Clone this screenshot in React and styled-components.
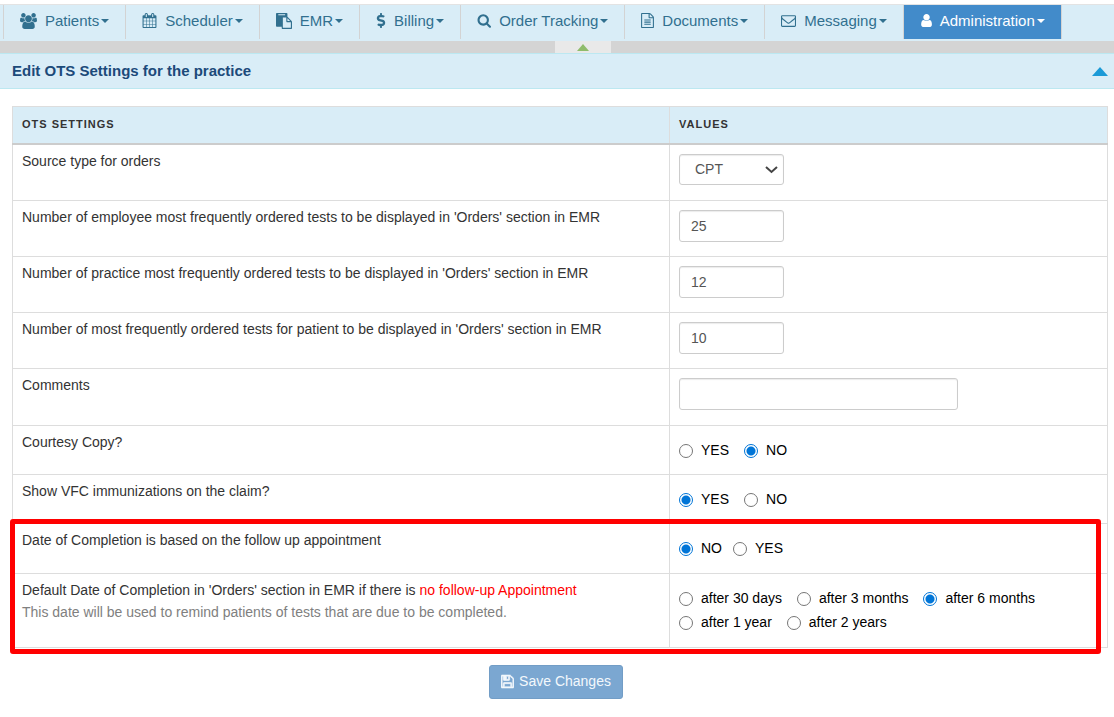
import { useState } from 'react';
import styled, { createGlobalStyle, css } from 'styled-components';
import { FaDollarSign } from 'react-icons/fa';

const GlobalStyle = createGlobalStyle`
    *,
    *::before,
    *::after {
        box-sizing: border-box;
    }

    body {
        margin: 0;
        background: #fff;
        color: #333;
        font-family: 'Liberation Sans', Arial, sans-serif;
        font-size: 14px;
        line-height: 22px;
    }
`;

const Nav = styled.nav`
    display: flex;
    margin-top: 4px;
    padding-left: 3px;
    height: 37px;
    background: #d9edf7;
    border-top: 1px solid #e3e3e3;
`;

const NavButton = styled.button`
    display: flex;
    align-items: center;
    height: 34px;
    padding: 0 16px 3px;
    border: 0;
    border-left: 1px solid #d3d3d3;
    background: transparent;
    color: #31708f;
    font-family: inherit;
    font-size: 15px;
    white-space: nowrap;

    svg {
        flex: none;
        margin-right: 8px;
    }

    ${(props) =>
        props.$active &&
        css`
            background: #428bca;
            color: #fff;
            border-right: 1px solid #d3d3d3;
        `}
`;

const DollarIcon = styled(FaDollarSign)`
    width: 10px;
    height: 15px;
`;

const Caret = styled.span`
    margin-left: 2px;
    border-top: 4px solid currentColor;
    border-left: 4px solid transparent;
    border-right: 4px solid transparent;
`;

const CollapseBar = styled.div`
    display: flex;
    justify-content: center;
    padding-left: 52px;
    height: 12px;
    background: #d4d4d4;
`;

const CollapseTab = styled.button`
    display: flex;
    align-items: center;
    justify-content: center;
    width: 56px;
    padding: 0;
    border: 0;
    background: #e9e9e9;
    color: #8fbc6b;
`;

const ArrowUp = styled.span`
    border-bottom: ${(props) => props.$height}px solid currentColor;
    border-left: ${(props) => props.$half}px solid transparent;
    border-right: ${(props) => props.$half}px solid transparent;
`;

const PanelHead = styled.header`
    display: flex;
    align-items: center;
    justify-content: space-between;
    height: 36px;
    padding: 0 6px 0 12px;
    background: #d9edf7;
    border-top: 1px solid #bce8f1;
    border-bottom: 1px solid #bce8f1;

    h1 {
        margin: 0;
        color: #1c4a7a;
        font-size: 15px;
    }
`;

const PanelToggle = styled.button`
    display: flex;
    padding: 0;
    border: 0;
    background: none;
    color: #1a9ad7;
`;

const TableWrap = styled.div`
    position: relative;
    margin: 17px 6px 0 12px;
`;

const Table = styled.table`
    width: 100%;
    border-collapse: collapse;
    table-layout: fixed;

    th,
    td {
        padding: 9px;
        border: 1px solid #ddd;
        text-align: left;
        vertical-align: top;
    }

    th {
        width: 40%;
        height: 37px;
        padding: 6px 9px;
        background: #d9edf7;
        border-bottom: 2px solid #ccc;
        font-size: 11px;
        letter-spacing: 1px;
        text-transform: uppercase;
    }

    th:first-child {
        width: 60%;
    }

    td:first-child {
        padding-top: 5px;
    }
`;

const Row = styled.tr`
    height: ${(props) => props.$height}px;
`;

const Highlight = styled.div`
    position: absolute;
    left: -2px;
    right: 7px;
    bottom: -6px;
    height: 135px;
    border: 5px solid #f00;
    border-radius: 3px;
    pointer-events: none;
`;

const fieldStyle = css`
    display: block;
    border: 1px solid #ccc;
    border-radius: 3px;
    background-color: #fff;
    box-shadow: inset 0 1px 1px rgba(0, 0, 0, 0.08);
    color: #555;
    font-family: inherit;
    font-size: 14px;
`;

const TextInput = styled.input`
    ${fieldStyle}
    width: ${(props) => (props.$wide ? 279 : 105)}px;
    height: 32px;
    padding: 0 11px;
`;

const SelectWrap = styled.div`
    position: relative;
    width: 105px;

    svg {
        position: absolute;
        right: 6px;
        top: 11px;
        pointer-events: none;
    }
`;

const Select = styled.select`
    ${fieldStyle}
    appearance: none;
    width: 100%;
    height: 31px;
    padding: 0 15px;
`;

const RadioGroup = styled.div`
    display: flex;
    flex-wrap: wrap;
    column-gap: ${(props) => props.$gap || 15}px;
    row-gap: 2px;
    max-width: 380px;
    padding-top: 4px;
    color: #000;
`;

const RadioLabel = styled.label`
    display: flex;
    align-items: center;
    gap: 8px;
`;

const Radio = styled.input`
    appearance: none;
    width: 14px;
    height: 14px;
    margin: 1px 0 0;
    border: 1px solid #767676;
    border-radius: 50%;
    background: #fff;

    &:checked {
        border-color: #0075d7;
        background: radial-gradient(circle, #0075d7 4px, #fff 5px);
    }
`;

const Warning = styled.span`
    color: #f00;
`;

const Hint = styled.div`
    color: #808080;
`;

const Actions = styled.div`
    display: flex;
    justify-content: center;
    margin-top: 17px;
    padding-right: 2px;
`;

const SaveButton = styled.button`
    display: flex;
    align-items: center;
    gap: 5px;
    height: 34px;
    padding: 0 11px 2px;
    border: 1px solid #729dc6;
    border-radius: 3px;
    background: #7ba7d1;
    color: #f3f8fc;
    font-family: inherit;
    font-size: 14px;
`;

// icon outlines, drawn on a 1792 grid
const icons = {
    users: 'M593 896q-162 5-265 128h-134q-82 0-138-40.5t-56-118.500q0-353 124-353 6 0 43.500 21t97.500 42.500 119 21.500q67 0 133-23-5 37-5 66 0 139 81 256zm1071 637q0 120-73 189.500t-194 69.500h-874q-121 0-194-69.500t-73-189.500q0-53 3.500-103.500t14-109 26.500-108.500 43-97.500 62-81 85.500-53.500 111.500-20q10 0 43 21.500t73 48 107 48 135 21.500 135-21.500 107-48 73-48 43-21.500q61 0 111.500 20t85.500 53.500 62 81 43 97.500 26.500 108.500 14 109 3.500 103.500zm-1024-1277q0 106-75 181t-181 75-181-75-75-181 75-181 181-75 181 75 75 181zm704 384q0 159-112.500 271.500t-271.500 112.500-271.500-112.500-112.500-271.500 112.500-271.500 271.500-112.500 271.500 112.500 112.500 271.500zm576 225q0 78-56 118.500t-138 40.500h-134q-103-123-265-128 81-117 81-256 0-29-5-66 66 23 133 23 59 0 119-21.500t97.500-42.500 43.500-21q124 0 124 353zm-128-609q0 106-75 181t-181 75-181-75-75-181 75-181 181-75 181 75 75 181z',
    calendar:
        'M192 1664h288v-288h-288v288zm352 0h320v-288h-320v288zm-352-352h288v-320h-288v320zm352 0h320v-320h-320v320zm-352-384h288v-288h-288v288zm736 736h320v-288h-320v288zm-384-736h320v-288h-320v288zm768 736h288v-288h-288v288zm-384-352h320v-320h-320v320zm-352-864v-288q0-13-9.500-22.500t-22.500-9.500h-64q-13 0-22.500 9.500t-9.500 22.500v288q0 13 9.500 22.500t22.500 9.500h64q13 0 22.500-9.500t9.500-22.500zm736 864h288v-320h-288v320zm-384-384h320v-288h-320v288zm384 0h288v-288h-288v288zm32-480v-288q0-13-9.500-22.500t-22.500-9.500h-64q-13 0-22.500 9.500t-9.500 22.500v288q0 13 9.500 22.500t22.500 9.500h64q13 0 22.500-9.500t9.500-22.500zm384-64v1280q0 52-38 90t-90 38h-1408q-52 0-90-38t-38-90v-1280q0-52 38-90t90-38h128v-96q0-66 47-113t113-47h64q66 0 113 47t47 113v96h384v-96q0-66 47-113t113-47h64q66 0 113 47t47 113v96h128q52 0 90 38t38 90z',
    paste: 'M768 1664h896v-640h-416q-40 0-68-28t-28-68v-416h-384v1152zm256-1440v-64q0-13-9.500-22.500t-22.500-9.500h-704q-13 0-22.500 9.500t-9.500 22.500v64q0 13 9.500 22.500t22.500 9.500h704q13 0 22.500-9.500t9.500-22.500zm256 672h299l-299-299v299zm512 128v672q0 40-28 68t-68 28h-960q-40 0-68-28t-28-68v-160h-544q-40 0-68-28t-28-68v-1344q0-40 28-68t68-28h1088q40 0 68 28t28 68v328q21 13 36 28l408 408q28 28 48 76t20 88z',
    search: 'M1216 832q0-185-131.500-316.500t-316.500-131.500-316.500 131.500-131.500 316.500 131.500 316.500 316.500 131.500 316.500-131.500 131.500-316.500zm512 832q0 52-38 90t-90 38q-54 0-90-38l-343-342q-179 124-399 124-143 0-273.500-55.500t-225-150-150-225-55.500-273.500 55.500-273.500 150-225 225-150 273.500-55.500 273.500 55.500 225 150 150 225 55.500 273.500q0 220-124 399l343 343q37 37 37 90z',
    file: 'M1468 380q28 28 48 76t20 88v1152q0 40-28 68t-68 28h-1344q-40 0-68-28t-28-68v-1600q0-40 28-68t68-28h896q40 0 88 20t76 48zm-444-244v376h376q-10-29-22-41l-313-313q-12-12-41-22zm384 1528v-1024h-416q-40 0-68-28t-28-68v-416h-768v1536h1280zm-1024-864q0-14 9-23t23-9h704q14 0 23 9t9 23v64q0 14-9 23t-23 9h-704q-14 0-23-9t-9-23v-64zm736 224q14 0 23 9t9 23v64q0 14-9 23t-23 9h-704q-14 0-23-9t-9-23v-64q0-14 9-23t23-9h704zm0 256q14 0 23 9t9 23v64q0 14-9 23t-23 9h-704q-14 0-23-9t-9-23v-64q0-14 9-23t23-9h704z',
    envelope:
        'M1664 1504v-768q-32 36-69 66-268 206-426 338-51 43-83 67t-86.500 48.500-102.500 24.500h-2q-48 0-102.500-24.500t-86.500-48.500-83-67q-158-132-426-338-37-30-69-66v768q0 13 9.500 22.500t22.500 9.500h1472q13 0 22.500-9.500t9.500-22.500zm0-1051v-24.500l-.5-13-3-12.500-5.500-9-9-7.500-14-2.500h-1472q-13 0-22.500 9.500t-9.500 22.500q0 168 147 284 193 152 401 317 6 5 35 29.500t46 37.500 44.500 31.500 50.500 27.500 43 9h2q20 0 43-9t50.500-27.500 44.500-31.500 46-37.500 35-29.500q208-165 401-317 54-43 100.500-115.500t46.500-131.500zm128-37v1088q0 66-47 113t-113 47h-1472q-66 0-113-47t-47-113v-1088q0-66 47-113t113-47h1472q66 0 113 47t47 113z',
    user: 'M1408 1399q0 109-62.500 187t-150.500 78h-854q-88 0-150.500-78t-62.500-187q0-85 8.500-160.500t31.500-152 58.500-131 94-89 134.500-34.500q131 128 313 128t313-128q76 0 134.500 34.500t94 89 58.500 131 31.500 152 8.500 160.500zm-256-887q0 159-112.500 271.500t-271.500 112.500-271.500-112.500-112.500-271.500 112.500-271.500 271.500-112.500 271.500 112.500 112.500 271.500z',
    save: 'M384 1536h768v-384h-768v384zm896 0h128v-896q0-14-10-38.500t-20-34.500l-281-281q-10-10-34-20t-39-10v416q0 40-28 68t-68 28h-576q-40 0-68-28t-28-68v-416h-128v1280h128v-416q0-40 28-68t68-28h832q40 0 68 28t28 68v416zm-384-928v-320q0-13-9.500-22.500t-22.500-9.500h-192q-13 0-22.500 9.500t-9.500 22.500v320q0 13 9.500 22.500t22.500 9.500h192q13 0 22.500-9.500t9.500-22.500zm640 32v928q0 40-28 68t-68 28h-1344q-40 0-68-28t-28-68v-1344q0-40 28-68t68-28h928q40 0 88 20t76 48l280 280q28 28 48 76t20 88z',
};

const Glyph = styled.svg`
    fill: currentColor;
    stroke: currentColor;
    stroke-width: ${(props) => (props.$bold ? 80 : 0)}px;
`;

function Icon({ name, width, grid = 1792, size = 15, bold }) {
    return (
        <Glyph width={width} height={size} viewBox={`0 0 ${grid} 1792`} $bold={bold} aria-hidden="true">
            <path d={icons[name]} />
        </Glyph>
    );
}

const menu = [
    { label: 'Patients', icon: <Icon name="users" width={17} grid={1920} size={16} /> },
    { label: 'Scheduler', icon: <Icon name="calendar" width={15} /> },
    { label: 'EMR', icon: <Icon name="paste" width={16} size={16} /> },
    { label: 'Billing', icon: <DollarIcon /> },
    { label: 'Order Tracking', icon: <Icon name="search" width={14} grid={1728} /> },
    { label: 'Documents', icon: <Icon name="file" width={13} grid={1536} /> },
    { label: 'Messaging', icon: <Icon name="envelope" width={15} /> },
    { label: 'Administration', icon: <Icon name="user" width={12} grid={1408} />, active: true },
];

const counts = [
    { id: 'employee', label: "Number of employee most frequently ordered tests to be displayed in 'Orders' section in EMR", value: '25' },
    { id: 'practice', label: "Number of practice most frequently ordered tests to be displayed in 'Orders' section in EMR", value: '12' },
    { id: 'patient', label: "Number of most frequently ordered tests for patient to be displayed in 'Orders' section in EMR", value: '10' },
];

function Radios({ name, options, initial, gap, labelledBy }) {
    const [value, setValue] = useState(initial);

    return (
        <RadioGroup role="radiogroup" aria-labelledby={labelledBy} $gap={gap}>
            {options.map((option) => (
                <RadioLabel key={option}>
                    <Radio
                        type="radio"
                        name={name}
                        checked={value === option}
                        onChange={() => setValue(option)}
                    />
                    {option}
                </RadioLabel>
            ))}
        </RadioGroup>
    );
}

export default function App() {
    return (
        <>
            <GlobalStyle />
            <Nav>
                {menu.map((item) => (
                    <NavButton key={item.label} $active={item.active}>
                        {item.icon}
                        {item.label}
                        <Caret />
                    </NavButton>
                ))}
            </Nav>
            <CollapseBar>
                <CollapseTab aria-label="Collapse menu">
                    <ArrowUp $height={7} $half={6} />
                </CollapseTab>
            </CollapseBar>
            <PanelHead>
                <h1>Edit OTS Settings for the practice</h1>
                <PanelToggle aria-label="Collapse panel">
                    <ArrowUp $height={9} $half={8} />
                </PanelToggle>
            </PanelHead>
            <TableWrap>
                <Table>
                    <thead>
                        <tr>
                            <th>OTS Settings</th>
                            <th>Values</th>
                        </tr>
                    </thead>
                    <tbody>
                        <Row $height={57}>
                            <td>
                                <label htmlFor="source">Source type for orders</label>
                            </td>
                            <td>
                                <SelectWrap>
                                    <Select id="source" defaultValue="CPT">
                                        <option>CPT</option>
                                    </Select>
                                    <svg width="13" height="9" viewBox="0 0 13 9" aria-hidden="true">
                                        <path d="M1 2l5.500 5L12 2" fill="none" stroke="#444" strokeWidth="2" />
                                    </svg>
                                </SelectWrap>
                            </td>
                        </Row>
                        {counts.map((item) => (
                            <Row key={item.id} $height={56}>
                                <td>
                                    <label htmlFor={item.id}>{item.label}</label>
                                </td>
                                <td>
                                    <TextInput id={item.id} defaultValue={item.value} />
                                </td>
                            </Row>
                        ))}
                        <Row $height={57}>
                            <td>
                                <label htmlFor="comments">Comments</label>
                            </td>
                            <td>
                                <TextInput id="comments" $wide />
                            </td>
                        </Row>
                        <Row $height={49}>
                            <td id="courtesy">Courtesy Copy?</td>
                            <td>
                                <Radios name="courtesy" labelledBy="courtesy" options={['YES', 'NO']} initial="NO" />
                            </td>
                        </Row>
                        <Row $height={49}>
                            <td id="vfc">Show VFC immunizations on the claim?</td>
                            <td>
                                <Radios name="vfc" labelledBy="vfc" options={['YES', 'NO']} initial="YES" />
                            </td>
                        </Row>
                        <Row $height={50}>
                            <td id="based">Date of Completion is based on the follow up appointment</td>
                            <td>
                                <Radios name="based" labelledBy="based" options={['NO', 'YES']} initial="NO" gap={11} />
                            </td>
                        </Row>
                        <Row $height={74}>
                            <td id="due">
                                Default Date of Completion in 'Orders' section in EMR if there is{' '}
                                <Warning>no follow-up Appointment</Warning>
                                <Hint>This date will be used to remind patients of tests that are due to be completed.</Hint>
                            </td>
                            <td>
                                <Radios
                                    name="due"
                                    labelledBy="due"
                                    options={['after 30 days', 'after 3 months', 'after 6 months', 'after 1 year', 'after 2 years']}
                                    initial="after 6 months"
                                />
                            </td>
                        </Row>
                    </tbody>
                </Table>
                <Highlight />
            </TableWrap>
            <Actions>
                <SaveButton>
                    <Icon name="save" width={13} grid={1536} bold />
                    Save Changes
                </SaveButton>
            </Actions>
        </>
    );
}
